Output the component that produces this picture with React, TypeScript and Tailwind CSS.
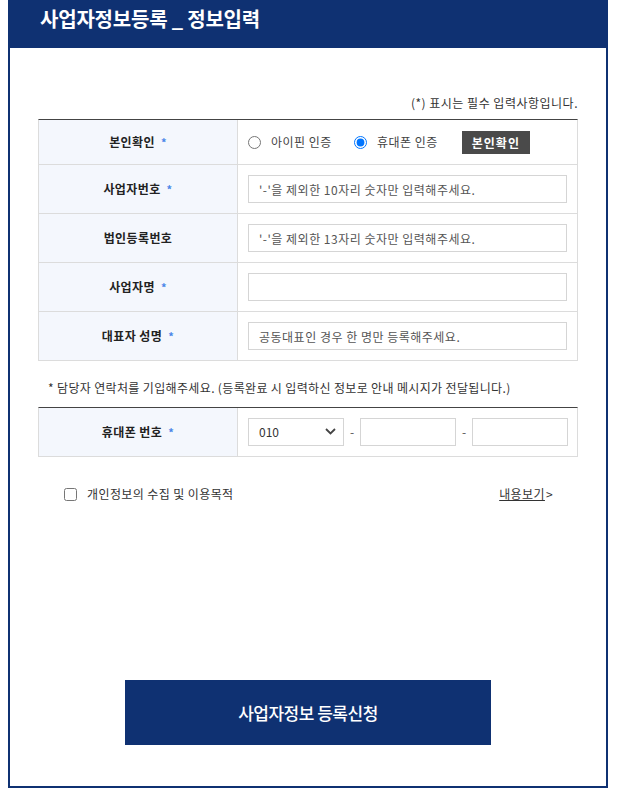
import React from 'react'

const FONT = { fontFamily: '"Noto Sans CJK KR", "Noto Sans", sans-serif' }

function Label({ text, req = true }: { text: string; req?: boolean }) {
  return (
    <div className="flex items-center justify-center bg-[#f4f7fd] border-r border-[#dcdcdc] text-[12px] font-bold text-[#222] tracking-[0.4px]">
      <span>{text}</span>
      {req && <span className="ml-[6px] text-[#4a86e8] text-[11px]">*</span>}
    </div>
  )
}

function TextInput({ ph }: { ph?: string }) {
  return (
    <input
      type="text"
      placeholder={ph}
      className="w-full h-[28px] border border-[#d5d5d5] px-[10px] text-[12px] tracking-[0.5px] text-[#333] placeholder:text-[#555] outline-none"
      style={FONT}
    />
  )
}

const ROWS = [
  { label: '사업자번호', ph: "'-'을 제외한 10자리 숫자만 입력해주세요.", req: true },
  { label: '법인등록번호', ph: "'-'을 제외한 13자리 숫자만 입력해주세요.", req: false },
  { label: '사업자명', ph: '', req: true },
  { label: '대표자 성명', ph: '공동대표인 경우 한 명만 등록해주세요.', req: true },
]

export default function App() {
  return (
    <div className="w-[633px] h-[795px] bg-white" style={FONT}>
      <div className="ml-[8px] w-[600px] h-[788px] border-2 border-t-0 border-[#0f3172] flex flex-col">
        {/* header */}
        <div className="-mx-[2px] h-[48px] bg-[#0f3172] pl-[32px] pt-[5px]">
          <h1 className="text-white text-[20px] font-bold leading-[28px] tracking-[-0.2px]">사업자정보등록 _ 정보입력</h1>
        </div>

        <div className="px-[28px] flex flex-col flex-1">
          <p className="mt-[46px] mb-[7px] text-right text-[12px] leading-[18px] tracking-[0.5px] text-[#333]">(*) 표시는 필수 입력사항입니다.</p>

          {/* table 1 */}
          <div className="border-t border-t-[#444] border-x border-x-[#dcdcdc]">
            <div className="grid grid-cols-[199px_1fr] border-b border-[#dcdcdc] h-[45px]">
              <Label text="본인확인" />
              <div className="flex items-center pl-[10px] text-[12px] tracking-[0.5px] text-[#444]">
                <label className="flex items-center">
                  <input type="radio" name="auth" className="w-[13px] h-[13px] m-0" />
                  <span className="ml-[10px]">아이핀 인증</span>
                </label>
                <label className="flex items-center ml-[22px]">
                  <input type="radio" name="auth" defaultChecked className="w-[13px] h-[13px] m-0" />
                  <span className="ml-[10px]">휴대폰 인증</span>
                </label>
                <button className="ml-[24px] h-[23px] px-[10px] bg-[#4a4a4a] text-white text-[12px] font-bold leading-[23px] tracking-[1px]">본인확인</button>
              </div>
            </div>
            {ROWS.map((r) => (
              <div key={r.label} className="grid grid-cols-[199px_1fr] border-b border-[#dcdcdc] h-[49px]">
                <Label text={r.label} req={r.req} />
                <div className="flex items-center px-[10px]">
                  <TextInput ph={r.ph} />
                </div>
              </div>
            ))}
          </div>

          <p className="mt-[18px] mb-[10px] pl-[10px] text-[12px] leading-[18px] tracking-[0.35px] text-[#333]">* 담당자 연락처를 기입해주세요. (등록완료 시 입력하신 정보로 안내 메시지가 전달됩니다.)</p>

          {/* table 2 */}
          <div className="border-t border-t-[#444] border-x border-x-[#dcdcdc]">
            <div className="grid grid-cols-[199px_1fr] border-b border-[#dcdcdc] h-[49px]">
              <Label text="휴대폰 번호" />
              <div className="flex items-center px-[10px] text-[12px] text-[#555]">
                <div className="relative w-[96px] h-[28px]">
                  <select className="appearance-none w-full h-full border border-[#d5d5d5] pl-[10px] text-[12px] text-[#333] bg-white outline-none" style={FONT}>
                    <option>010</option>
                    <option>011</option>
                    <option>016</option>
                  </select>
                  <svg className="absolute right-[8px] top-[10px] pointer-events-none" width="11" height="7" viewBox="0 0 11 7">
                    <path d="M1 1l4.5 4.5L10 1" fill="none" stroke="#444" strokeWidth="1.8" />
                  </svg>
                </div>
                <span className="w-[16px] text-center">-</span>
                <div className="w-[96px]"><TextInput /></div>
                <span className="w-[16px] text-center">-</span>
                <div className="w-[96px]"><TextInput /></div>
              </div>
            </div>
          </div>

          <div className="mt-[28px] h-[18px] flex items-center justify-between pl-[26px] pr-[25px] text-[12px] tracking-[0.4px] text-[#333]">
            <label className="flex items-center">
              <input type="checkbox" className="w-[13px] h-[13px] m-0" />
              <span className="ml-[10px]">개인정보의 수집 및 이용목적</span>
            </label>
            <a className="flex items-center text-[#333]">
              <span className="underline">내용보기</span>
              <span className="ml-[1px]">&gt;</span>
            </a>
          </div>

          <div className="mt-[177px] flex justify-center">
            <button className="w-[366px] h-[65px] bg-[#0f3172] text-white text-[17px] font-medium tracking-[-0.5px]">사업자정보 등록신청</button>
          </div>
        </div>
      </div>
    </div>
  )
}
